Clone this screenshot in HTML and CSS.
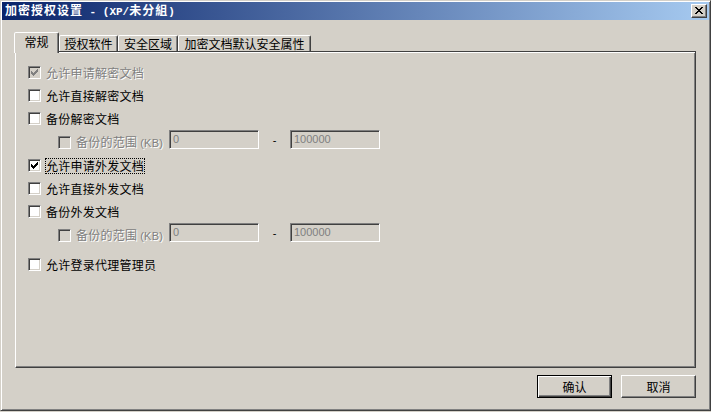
FILE: index.html
```html
<!DOCTYPE html>
<html lang="zh-CN">
<head>
<meta charset="utf-8">
<title>加密授权设置</title>
<link rel="stylesheet" href="styles.css">
</head>
<body>
<div class="window">
  <div class="titlebar">
    <span class="title">加密授权设置<span class="mono"> - (XP/</span>未分組<span class="mono">)</span></span>
    <span class="closebtn"><svg width="8" height="7" viewBox="0 0 8 7" shape-rendering="crispEdges"><path fill="#000" d="M0 0h2v1h-2z M6 0h2v1h-2z M1 1h2v1h-2z M5 1h2v1h-2z M2 2h4v1h-4z M3 3h2v1h-2z M2 4h4v1h-4z M1 5h2v1h-2z M5 5h2v1h-2z M0 6h2v1h-2z M6 6h2v1h-2z"/></svg></span>
  </div>

  <div class="tabstrip">
    <div class="tab selected">常规</div>
    <div class="tab w59">授权软件</div>
    <div class="tab w60">安全区域</div>
    <div class="tab w133">加密文档默认安全属性</div>
  </div>

  <div class="panel">
    <div class="row">
      <span class="cb disabled"><svg width="11" height="11" viewBox="0 0 11 11" shape-rendering="crispEdges"><path fill="#808080" d="M2 4h1v3h-1z M3 5h1v3h-1z M4 6h1v3h-1z M5 5h1v3h-1z M6 4h1v3h-1z M7 3h1v3h-1z M8 2h1v3h-1z"/></svg></span>
      <span class="label dis">允许申请解密文档</span>
    </div>
    <div class="row">
      <span class="cb"></span>
      <span class="label">允许直接解密文档</span>
    </div>
    <div class="row">
      <span class="cb"></span>
      <span class="label">备份解密文档</span>
    </div>
    <div class="row sub">
      <span class="cb disabled"></span>
      <span class="label dis range">备份的范围 <span class="latin">(KB)</span></span>
      <span class="input">0</span>
      <span class="dash">-</span>
      <span class="input">100000</span>
    </div>
    <div class="row">
      <span class="cb"><svg width="11" height="11" viewBox="0 0 11 11" shape-rendering="crispEdges"><path fill="#000" d="M2 4h1v3h-1z M3 5h1v3h-1z M4 6h1v3h-1z M5 5h1v3h-1z M6 4h1v3h-1z M7 3h1v3h-1z M8 2h1v3h-1z"/></svg></span>
      <span class="label focus">允许申请外发文档</span>
    </div>
    <div class="row">
      <span class="cb"></span>
      <span class="label">允许直接外发文档</span>
    </div>
    <div class="row">
      <span class="cb"></span>
      <span class="label">备份外发文档</span>
    </div>
    <div class="row sub">
      <span class="cb disabled"></span>
      <span class="label dis range">备份的范围 <span class="latin">(KB)</span></span>
      <span class="input">0</span>
      <span class="dash">-</span>
      <span class="input">100000</span>
    </div>
    <div class="row last">
      <span class="cb"></span>
      <span class="label">允许登录代理管理员</span>
    </div>
  </div>

  <div class="buttons">
    <button class="btn default">确认</button>
    <button class="btn">取消</button>
  </div>
</div>
</body>
</html>
```

FILE: styles.css
```css
* { box-sizing: border-box; }
html, body {
  margin: 0;
  padding: 0;
  background: #d4d0c8;
  width: 711px;
  height: 412px;
  overflow: hidden;
}
body {
  font-family: "Noto Sans CJK SC", "Liberation Sans", sans-serif;
  font-size: 12px;
  color: #000;
}
.window {
  width: 711px;
  height: 411px;
  border: 1px solid;
  border-color: #d4d0c8 #404040 #404040 #d4d0c8;
  box-shadow: inset 1px 1px #fff, inset -1px -1px #808080;
  padding: 1px;
  display: flex;
  flex-direction: column;
  background: #d4d0c8;
}
.titlebar {
  height: 18px;
  background: linear-gradient(to right, #0a246a 0%, #a6caf0 100%);
  display: flex;
  align-items: center;
  justify-content: space-between;
  padding: 0 2px 0 3px;
}
.title {
  color: #fff;
  font-weight: bold;
  font-size: 12px;
  line-height: 18px;
  letter-spacing: 1px;
}
.mono {
  font-family: "Liberation Mono", monospace;
  font-size: 11px;
  letter-spacing: 0;
}
.closebtn {
  width: 16px;
  height: 14px;
  background: #d4d0c8;
  border: 1px solid;
  border-color: #fff #404040 #404040 #fff;
  box-shadow: inset -1px -1px #808080;
  display: flex;
  align-items: center;
  justify-content: center;
  padding-bottom: 1px;
}
.tabstrip {
  display: flex;
  align-items: flex-end;
  height: 19px;
  margin: 12px 0 0 12px;
}
.tab {
  height: 16px;
  border: 1px solid;
  border-bottom: none;
  border-color: #fff #404040 transparent #fff;
  box-shadow: inset -1px 0 #808080;
  border-radius: 2px 2px 0 0;
  display: flex;
  align-items: center;
  justify-content: center;
  line-height: 14px;
  background: #d4d0c8;
}
.tab.selected {
  width: 45px;
  height: 21px;
  margin-bottom: -2px;
  position: relative;
  z-index: 2;
  padding-bottom: 3px;
}
.w59 { width: 59px; }
.w60 { width: 60px; }
.w133 { width: 133px; }
.panel {
  margin-left: 13px;
  width: 681px;
  height: 317px;
  border-top: 1px solid #404040;
  border-left: 1px solid #fff;
  border-right: 1px solid #404040;
  border-bottom: 1px solid #404040;
  box-shadow: inset 0 1px #fff, inset -1px -1px #808080;
  padding: 9px 0 0 12px;
  display: flex;
  flex-direction: column;
}
.row {
  display: flex;
  align-items: center;
  height: 23px;
}
.row.sub {
  height: 24px;
  padding-left: 30px;
}
.row.last { margin-top: 6px; }
.cb {
  width: 13px;
  height: 13px;
  flex: none;
  border: 1px solid;
  border-color: #808080 #fff #fff #808080;
  box-shadow: inset 1px 1px #404040, inset -1px -1px #d4d0c8;
  background: #fff;
  margin-right: 5px;
  display: flex;
}
.cb.disabled { background: #d4d0c8; }
.cb svg { display: block; }
.label {
  line-height: 14px;
  white-space: nowrap;
  border: 1px solid transparent;
  margin-left: -1px;
  letter-spacing: 0.25px;
}
.label.focus { border: 1px dotted #000; }
.dis {
  color: #808080;
  text-shadow: 1px 1px 0 #fff;
}
.range { width: 94px; }
.latin {
  font-family: "Liberation Sans", sans-serif;
  font-size: 11px;
}
.input {
  width: 90px;
  height: 19px;
  border: 1px solid;
  border-color: #808080 #fff #fff #808080;
  box-shadow: inset 1px 1px #404040, inset -1px -1px #d4d0c8;
  background: #d4d0c8;
  color: #808080;
  font-family: "Liberation Sans", sans-serif;
  font-size: 11px;
  line-height: 17px;
  padding-left: 3px;
  margin-top: -5px;
}
.dash {
  width: 31px;
  text-align: center;
  font-family: "Liberation Sans", sans-serif;
  font-size: 11px;
  margin-top: -4px;
}
.buttons {
  display: flex;
  justify-content: flex-end;
  gap: 9px;
  margin-top: 7px;
  padding-right: 13px;
}
.btn {
  width: 75px;
  height: 23px;
  font-family: "Noto Sans CJK SC", sans-serif;
  font-size: 12px;
  color: #000;
  background: #d4d0c8;
  border: 1px solid;
  border-color: #fff #404040 #404040 #fff;
  box-shadow: inset -1px -1px #808080;
  padding: 0;
  line-height: 20px;
}
.btn.default {
  border: 1px solid #000;
  box-shadow: inset 1px 1px #fff, inset -1px -1px #404040, inset -2px -2px #808080;
}
```
